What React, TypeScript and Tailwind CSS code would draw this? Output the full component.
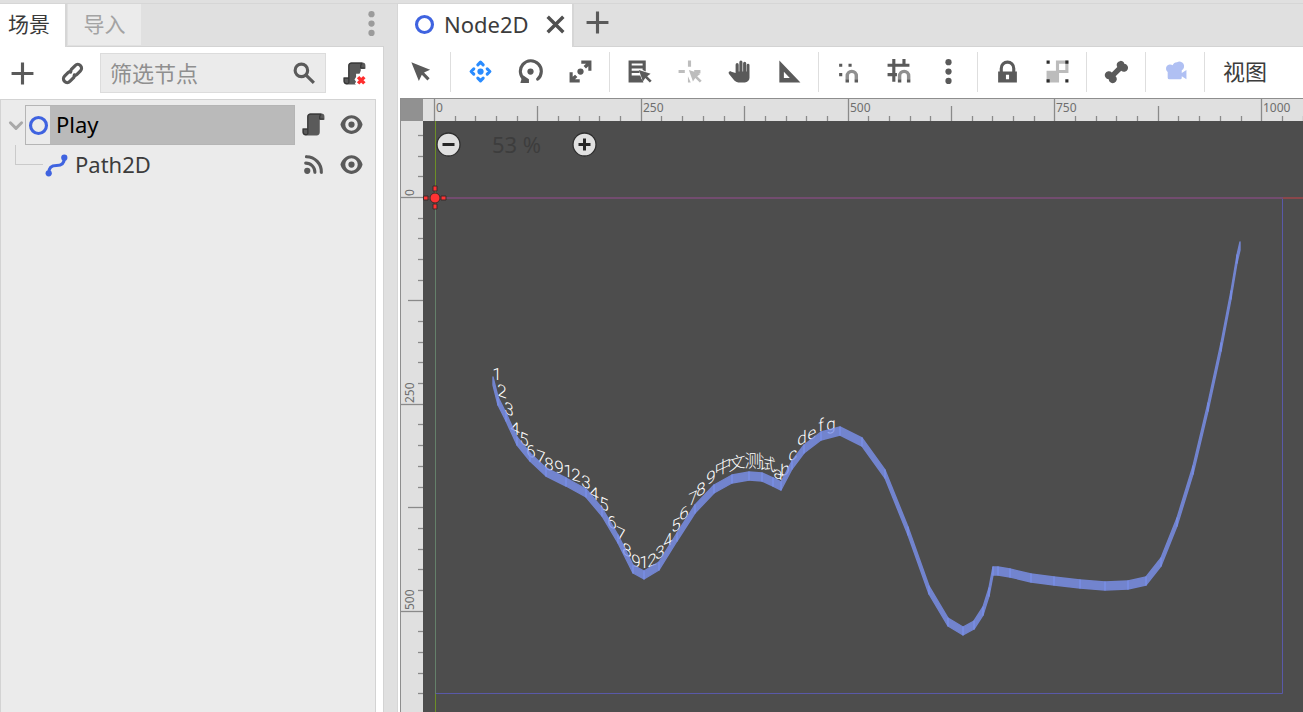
import type { ReactNode } from "react";

function Icon({ children, className = "" }: { children: ReactNode; className?: string }) {
  return (
    <svg viewBox="0 0 16 16" className={`size-[25px] shrink-0 ${className}`} fill="currentColor" aria-hidden="true">
      {children}
    </svg>
  );
}

const AddIcon = () => (
  <Icon>
    <path d="M7 1v6H1v2h6v6h2V9h6V7H9V1z" />
  </Icon>
);

const LinkIcon = () => (
  <Icon>
    <g fill="none" stroke="currentColor" strokeWidth="2" strokeLinecap="round">
      <path d="M6.8 7.2a2.6 2.6 0 0 1 .5-1.9l2.4-2.4a2.4 2.4 0 0 1 3.4 3.4l-2.4 2.4a2.4 2.4 0 0 1-1.6.7" />
      <path d="M9.2 8.8a2.6 2.6 0 0 1-.5 1.9l-2.4 2.4a2.4 2.4 0 0 1-3.4-3.4l2.4-2.4a2.4 2.4 0 0 1 1.6-.7" />
    </g>
  </Icon>
);

const SearchIcon = () => (
  <Icon>
    <path d="M6 1a5 5 0 0 0-5 5 5 5 0 0 0 5 5 5 5 0 0 0 2.752-.834l4.54 4.541 1.415-1.414-4.541-4.54A5 5 0 0 0 11 6a5 5 0 0 0-5-5zm0 2a3 3 0 0 1 3 3 3 3 0 0 1-3 3 3 3 0 0 1-3-3 3 3 0 0 1 3-3z" />
  </Icon>
);

const ScriptShape = () => (
  <>
    <path d="M6 1h7a2 2 0 0 1 2 2v2h-3v8a2 2 0 0 1-2 2H3a2 2 0 0 1-2-2v-2.5h3V3a2 2 0 0 1 2-2z" />
    <path
      d="M6 1.4h7M6 1.4A1.6 1.6 0 0 0 4.4 3v10A1.2 1.2 0 0 1 3 14.5 1.5 1.5 0 0 1 1.4 13v-2.1h3M12 4.6V3a1.6 1.6 0 0 1 1-1.5M12 4.6h2.6"
      fill="none"
      stroke="#363636"
      strokeWidth=".8"
    />
  </>
);

const ScriptIcon = () => (
  <Icon>
    <ScriptShape />
  </Icon>
);

const ScriptRemoveIcon = () => (
  <Icon>
    <ScriptShape />
    <path d="M9 8.2h2.2l1-2.2H16v10H9.8l-1.6-1.4.8-1.4-1-1.4 1-1.6z" fill="#fff" />
    <path d="M10.3 10.3l4 4M14.3 10.3l-4 4" stroke="#ff2e2e" strokeWidth="2.2" />
  </Icon>
);

const EyeIcon = () => (
  <Icon>
    <path
      fillRule="evenodd"
      d="M8 2C5.4 2 2.2 3.9 1 7.700a1 1 0 0 0 0 .6C2.200 12.200 5.500 14 8 14s5.800-1.800 7-5.700a1 1 0 0 0 0-.6C13.900 3.900 10.600 2 8 2zm0 2a4 4 0 0 1 0 8 4 4 0 0 1 0-8zm0 2a2 2 0 0 0 0 4 2 2 0 0 0 0-4z"
    />
  </Icon>
);

const SignalIcon = () => (
  <Icon>
    <circle cx="4" cy="12" r="2" />
    <path d="M3 7.100a5.800 5.800 0 0 1 5.900 5.900M3.500 3a9.600 9.600 0 0 1 9.500 10" fill="none" stroke="currentColor" strokeWidth="2" strokeLinecap="round" />
  </Icon>
);

const NodeIcon = () => (
  <Icon className="text-[#3f63e0]">
    <circle cx="8" cy="8" r="5.1" fill="none" stroke="currentColor" strokeWidth="2" />
  </Icon>
);

const PathIcon = () => (
  <Icon className="text-[#3f63e0]">
    <path d="M3 13c0-4 2-5 5-5s5-1 5-5" fill="none" stroke="currentColor" strokeWidth="2" />
    <circle cx="3" cy="13" r="2" />
    <circle cx="13" cy="3" r="2" />
  </Icon>
);

const Cursor = "M0 0l2.600 7.400 1.500-2.200 2.900 2.900 1.200-1.200-2.900-2.900 2.200-1.500z";

const SelectIcon = () => (
  <Icon>
    <path d="M1.500 2l4.800 12 1.900-3.900 3.600 3.600 1.400-1.400-3.600-3.600L13.500 6.800z" />
  </Icon>
);

const MoveIcon = () => (
  <Icon>
    <circle cx="8" cy="8" r="2" />
    <path
      d="M6.300 3.700L8 2l1.700 1.700M6.300 12.300L8 14l1.700-1.700M3.700 6.300L2 8l1.700 1.700M12.300 6.300L14 8l-1.700 1.700"
      fill="none"
      stroke="currentColor"
      strokeWidth="2"
      strokeLinecap="round"
      strokeLinejoin="round"
    />
  </Icon>
);

const RotateIcon = () => (
  <Icon>
    <circle cx="8" cy="8" r="2" />
    <path d="M4.200 13.200A6.700 6.700 0 1 1 12.600 12.900" fill="none" stroke="currentColor" strokeWidth="2" strokeLinecap="round" />
    <path d="M1.500 15.300L3 10.200 7 13V15.300z" />
  </Icon>
);

const ScaleIcon = () => (
  <Icon>
    <circle cx="8" cy="8" r="2" />
    <path d="M8.500 1H15v6.500h-2V4.600L11.500 6 10 4.500 11.500 3h-3zM7.500 15H1V8.500h2v2.900L4.500 10 6 11.500 4.500 13h3z" />
  </Icon>
);

const ListSelectIcon = () => (
  <Icon>
    <path fillRule="evenodd" d="M1 1h11v7l-2-1V6H3v1.500h5V9H3v1.500h5.500l.8 2.500H3v0h6.800L10.500 15H1zM3 2.800V4.200h7V2.800z" />
    <path d={Cursor} transform="translate(7.600 7)" />
  </Icon>
);

const PivotIcon = () => (
  <Icon>
    <path d="M7 1h2v4H7zM1 7h4v2H1zM11 7h4v2h-2.500L11 8.500zM7 11l1.800 4H7z" />
    <path d={Cursor} transform="translate(7.600 7)" />
  </Icon>
);

const HandIcon = () => (
  <Icon>
    <path d="M5.500 9V3.600a1 1 0 0 1 2 0V8h.4V2a1 1 0 0 1 2 0v6h.4V2.700a1 1 0 0 1 2 0V8h.3V4a.9.9 0 0 1 1.800 0v8a3 3 0 0 1-3 3H7.200a3.400 3.400 0 0 1-2.500-1.200L1.300 9.600c-.8-1 .4-2.200 1.500-1.500z" />
  </Icon>
);

const RulerIcon = () => (
  <Icon>
    <path fillRule="evenodd" d="M1.500 1L15 15H1.500zM4.400 8.200v3.900h3.800z" />
  </Icon>
);

const Magnet = () => (
  <>
    <path d="M7.200 13v-2.200a2.900 2.900 0 0 1 5.800 0V13" fill="none" stroke="#909090" strokeWidth="2.200" />
    <path d="M6.100 12.900h2.200V15H6.100zM11.900 12.900h2.200V15h-2.200z" />
  </>
);

const SmartSnapIcon = () => (
  <Icon>
    <path d="M2 3h2v2H2zM8 3h2v2H8zM2 9h2v2H2z" />
    <Magnet />
  </Icon>
);

const GridSnapIcon = () => (
  <Icon>
    <path d="M4 0h2v3h4.500V0h2v3H15v2H6v4h1v2H6v3.500H4V11H1V9h3V5H1V3h3z" />
    <g transform="translate(1.500)">
      <Magnet />
    </g>
  </Icon>
);

const DotsIcon = () => (
  <Icon>
    <circle cx="8" cy="2" r="2" />
    <circle cx="8" cy="8" r="2" />
    <circle cx="8" cy="14" r="2" />
  </Icon>
);

const LockIcon = () => (
  <Icon>
    <path fillRule="evenodd" d="M8 1a5 5 0 0 0-5 5v2H2v7h12V8h-1V6a5 5 0 0 0-5-5zm0 2a3 3 0 0 1 3 3v2H5V6a3 3 0 0 1 3-3zM7 10h2v3H7z" />
  </Icon>
);

const GroupIcon = () => (
  <Icon>
    <g fill="#bcbcbc">
      <path d="M1 7.500h7.500V9H9v6H1z" />
      <path fillRule="evenodd" d="M7 1h8v8H7zM9 3v4h4V3z" />
    </g>
    <path d="M1 1h2v2H1zM13 1h2v2h-2zM1 13h2v2H1zM13 13h2v2h-2z" fill="#2d2d2d" />
  </Icon>
);

const BoneIcon = () => (
  <Icon>
    <path d="M10.500 1.200a2.600 2.600 0 0 0-2 3.900L5 8.600A2.600 2.600 0 1 0 3 13a2.600 2.600 0 1 0 4.400-2L11 7.500a2.600 2.600 0 1 0 2-4.500 2.600 2.600 0 0 0-2.500-1.800z" />
  </Icon>
);

const CameraIcon = () => (
  <Icon className="text-[#b0c0f3]">
    <path d="M9 2a3 3 0 0 0-2.800 2A2.500 2.500 0 1 0 3 8.300V12a1 1 0 0 0 1 1h7a1 1 0 0 0 1-1v-1l3 2V7l-3 2V7.200A3 3 0 0 0 9 2z" />
  </Icon>
);

function Tool({ label, children, className = "" }: { label: string; children: ReactNode; className?: string }) {
  return (
    <button type="button" aria-label={label} className={`flex h-10 w-[50px] shrink-0 items-center justify-center ${className}`}>
      {children}
    </button>
  );
}

const Separator = () => (
  <span className="flex w-[9px] shrink-0 justify-center">
    <span className="h-10 w-px bg-[#dedede]" />
  </span>
);

function SceneDock() {
  return (
    <aside className="flex w-[384px] shrink-0 flex-col">
      <div className="flex h-[43px] items-start border-b border-[#d3d3d3]">
        <div role="tablist" className="flex">
          <button role="tab" aria-selected="true" className="-mb-px h-[43px] w-[67px] border-r-2 border-[#d6d6d6] bg-white pb-0.5 pl-2 text-left text-[21px] text-[#3a3a3a]">
            场景
          </button>
          <button role="tab" aria-selected="false" className="ml-px h-[41px] w-[73px] bg-[#ebebeb] text-[21px] text-[#a3a3a3]">
            导入
          </button>
        </div>
        <button aria-label="停靠选项" className="mt-[7px] ml-auto text-[#9b9b9b]">
          <DotsIcon />
        </button>
      </div>
      <div className="flex min-h-0 flex-1 flex-col border-r border-[#d3d3d3] bg-white pr-[7px]">
        <div className="flex items-center py-[6px] text-[#5a5a5a]">
          <button aria-label="添加节点" className="flex w-[50px] justify-center pr-[6px]">
            <AddIcon />
          </button>
          <button aria-label="实例化场景" className="flex w-[50px] justify-center pr-[6px]">
            <LinkIcon />
          </button>
          <label className="flex h-10 min-w-0 flex-1 items-center border border-[#dcdcdc] bg-[#ebebeb] pr-2 pl-[9px]">
            <input
              type="text"
              aria-label="筛选节点"
              placeholder="筛选节点"
              className="min-w-0 flex-1 bg-transparent text-[22px] outline-none placeholder:text-[#8f8f8f]"
            />
            <SearchIcon />
          </label>
          <button aria-label="移除脚本" className="flex w-[50px] justify-center pl-[7px]">
            <ScriptRemoveIcon />
          </button>
        </div>
        <ul role="tree" className="flex-1 border border-b-0 border-[#d3d3d3] bg-[#ebebeb] pt-[5px] text-[22px] leading-[36px] text-[#3c3c3c]">
          <li role="treeitem" aria-selected="true" aria-expanded="true" className="flex h-10 items-center">
            <svg viewBox="0 0 16 16" className="ml-[6px] size-[18px] shrink-0" fill="none" stroke="#a9a9a9" strokeWidth="2.600" strokeLinecap="round" strokeLinejoin="round" aria-hidden="true">
              <path d="M3 6l5 5 5-5" />
            </svg>
            <div className="flex h-10 flex-1 items-center border border-[#b5b5b5] bg-[#bababa] text-black">
              <span className="flex h-[38px] w-6 items-center justify-center bg-[#ebebeb]">
                <NodeIcon />
              </span>
              <span className="pb-0.5 pl-[6px]">Play</span>
            </div>
            <span className="flex w-20 items-center justify-between pr-[11px] pb-0.5 pl-[6px] text-[#5a5a5a]">
              <button aria-label="打开脚本">
                <ScriptIcon />
              </button>
              <button aria-label="切换可见性">
                <EyeIcon />
              </button>
            </span>
          </li>
          <li role="treeitem" aria-selected="false" className="flex h-10 items-center">
            <span className="ml-[14px] h-5 w-7 self-start border-b border-l border-[#cacaca]" />
            <span className="flex flex-1 items-center pl-px">
              <PathIcon />
              <span className="pb-0.5 pl-[6px]">Path2D</span>
            </span>
            <span className="flex w-20 items-center justify-between pr-[11px] pb-0.5 pl-[6px] text-[#5a5a5a]">
              <button aria-label="信号连接">
                <SignalIcon />
              </button>
              <button aria-label="切换可见性">
                <EyeIcon />
              </button>
            </span>
          </li>
        </ul>
      </div>
    </aside>
  );
}

const UNIT = 0.8272;
const steps = (from: number, to: number) => Array.from({ length: to - from + 1 }, (_, i) => from + i);

function TopRuler() {
  return (
    <svg className="h-[22px] min-w-0 flex-1 bg-[#e0e0e0]" aria-hidden="true">
      {steps(0, 80).map((n) => {
        const x = Math.round(12 + n * 25 * UNIT) - 0.5;
        const top = n % 10 === 0 ? 0 : n % 5 === 0 ? 7 : 17;
        return <path key={n} d={`M${x} ${top}V23`} stroke="#8a8a8a" strokeWidth="1.300" />;
      })}
      {steps(0, 4).map((n) => (
        <text key={n} x={Math.round(13 + n * 250 * UNIT)} y="13" className="fill-[#6e6e6e] text-[12px]">
          {n * 250}
        </text>
      ))}
    </svg>
  );
}

function SideRuler() {
  return (
    <svg className="h-full w-[22px] shrink-0 bg-[#e0e0e0]" aria-hidden="true">
      {steps(-3, 80).map((n) => {
        const y = Math.round(77 + n * 25 * UNIT) - 0.5;
        const left = n % 10 === 0 ? 0 : n % 5 === 0 ? 7 : 17;
        return <path key={n} d={`M${left} ${y}H23`} stroke="#8a8a8a" strokeWidth="1.300" />;
      })}
      {steps(0, 2).map((n) => {
        const y = Math.round(75 + n * 250 * UNIT);
        return (
          <text key={n} x="13" y={y} transform={`rotate(-90 13 ${y})`} className="fill-[#6e6e6e] text-[12px]">
            {n * 250}
          </text>
        );
      })}
    </svg>
  );
}

type Point = [number, number];

// Upper edge of the ribbon; every segment hangs 10px below it.
const ribbon: Point[] = [
  [493, 376], [498, 396], [506, 412], [517, 436], [530, 452], [546, 467], [566, 477], [586, 488], [602, 507], [618, 534],
  [633, 564], [644, 570], [659, 561], [677, 532], [695, 504], [714, 484], [732, 474], [749, 471], [762, 472], [773, 477],
  [781, 481], [792, 460], [804, 444], [821, 431], [840, 426], [862, 437], [885, 469], [908, 526], [929, 585], [948, 617],
  [963, 626], [974, 620], [983, 606], [989, 587], [993, 566], [998, 566], [1010, 568], [1031, 573], [1054, 576], [1080, 579],
  [1105, 581], [1128, 580], [1146, 576], [1161, 557], [1177, 517], [1193, 465], [1208, 402], [1221, 342], [1231, 290],
  [1237, 254], [1240, 241],
];

// Character, centre x, centre y, slope in degrees.
const glyphs: [string, number, number, number][] = [
  ["1", 497, 374, 0], ["2", 502, 391, 20], ["3", 509, 409, 25], ["4", 515, 428, 25], ["5", 524, 439, 25], ["6", 531, 451, 20],
  ["7", 541, 457, 20], ["8", 549, 464, 15], ["9", 559, 467, 15], ["1", 568, 471, 15], ["2", 576, 475, 15], ["3", 586, 482, 20],
  ["4", 594, 493, 25], ["5", 604, 504, 25], ["6", 612, 522, 25], ["7", 621, 534, 25], ["8", 627, 550, 25], ["9", 636, 561, 20],
  ["1", 644, 562, 0], ["2", 652, 560, -20], ["3", 660, 552, -25], ["4", 668, 540, -25], ["5", 676, 525, -25], ["6", 684, 513, -25],
  ["7", 693, 498, -25], ["8", 701, 489, -25], ["9", 711, 477, -25], ["中", 723, 467, -25], ["文", 737, 463, -15], ["测", 753, 461, 0],
  ["试", 767, 464, 10], ["a", 778, 473, 20], ["b", 785, 469, -25], ["c", 793, 454, -25], ["d", 802, 438, -25], ["e", 812, 433, -25],
  ["f", 821, 425, -15], ["g", 831, 424, -10],
];

function Scene() {
  return (
    <svg className="h-full w-full" role="img" aria-label="2D 场景">
      <path d="M12 572.500H859.500V77" fill="none" stroke="#5959a8" />
      <path d="M0 77H2000" stroke="#8a474b" strokeWidth="2" />
      <path d="M12 77H860" stroke="#724c6f" strokeWidth="2" />
      <path d="M12.500 0V2000" stroke="#6d8f26" />
      <path d="M12.500 77V573" stroke="#64806a" />
      <g transform="translate(-423 -121)">
        <g className="fill-white font-['Roboto','Noto_Sans_CJK_SC',sans-serif] text-[17px] font-light" textAnchor="middle">
          {glyphs.map(([char, x, y, slope], i) => (
            <text key={i} transform={`translate(${x} ${y}) skewY(${slope})`} y="6">
              {char}
            </text>
          ))}
        </g>
        <g fill="#7c92ef" stroke="#7c92ef" strokeWidth="1.400" strokeLinejoin="round">
          {ribbon.slice(1).map(([x, y], i) => {
            const [px, py] = ribbon[i];
            return <path key={i} opacity=".8" d={`M${px} ${py + 1}L${x} ${y + 1}v8L${px} ${py + 9}z`} />;
          })}
        </g>
      </g>
      <g fill="#ff3333" stroke="#3a2a2a">
        <path d="M.5 75h4.500v4H.5zM18 75h5v4h-5zM10 65h4v5h-4zM10 83h4v5h-4z" />
        <circle cx="12" cy="77" r="5" />
      </g>
    </svg>
  );
}

function ZoomButton({ label, path }: { label: string; path: string }) {
  return (
    <button aria-label={label} className="size-[25px]">
      <svg viewBox="0 0 25 25" className="size-full" aria-hidden="true">
        <circle cx="12.500" cy="12.500" r="11.500" fill="#e0e0e0" stroke="#2e2e2e" strokeWidth="1.300" />
        <path d={path} stroke="#262626" strokeWidth="3" />
      </svg>
    </button>
  );
}

function Editor() {
  return (
    <main className="flex min-w-0 flex-1 flex-col">
      <div className="flex h-[43px] items-start border-b border-[#d3d3d3]">
        <div className="-mb-px flex h-[43px] w-[177px] items-center border-r-2 border-l border-[#d6d6d6] bg-white pb-[3px] pl-[14px] text-[#3c3c3c]">
          <NodeIcon />
          <span className="pl-[7px] text-[22px]">Node2D</span>
          <button aria-label="关闭标签页" className="ml-auto pr-1 text-[#505050]">
            <Icon>
              <path d="M3 3l10 10M13 3L3 13" stroke="currentColor" strokeWidth="2.200" />
            </Icon>
          </button>
        </div>
        <button aria-label="新建场景" className="mt-[6px] ml-[11px] text-[#5a5a5a]">
          <AddIcon />
        </button>
      </div>
      <div className="flex min-h-0 flex-1 flex-col border-l border-[#d6d6d6] bg-white pl-[2px]">
        <div className="-ml-1 flex h-[51px] items-center pb-[2px] text-[#5a5a5a]">
          <Tool label="选择模式"><SelectIcon /></Tool>
          <Separator />
          <Tool label="移动模式" className="text-[#2a8cff]"><MoveIcon /></Tool>
          <Tool label="旋转模式"><RotateIcon /></Tool>
          <Tool label="缩放模式"><ScaleIcon /></Tool>
          <Separator />
          <Tool label="列表选择"><ListSelectIcon /></Tool>
          <Tool label="更改轴心" className="text-[#bdbdbd]"><PivotIcon /></Tool>
          <Tool label="平移模式"><HandIcon /></Tool>
          <Tool label="标尺模式"><RulerIcon /></Tool>
          <Separator />
          <Tool label="智能吸附"><SmartSnapIcon /></Tool>
          <Tool label="栅格吸附"><GridSnapIcon /></Tool>
          <Tool label="吸附选项"><DotsIcon /></Tool>
          <Separator />
          <Tool label="锁定"><LockIcon /></Tool>
          <Tool label="编组"><GroupIcon /></Tool>
          <Separator />
          <Tool label="骨骼选项"><BoneIcon /></Tool>
          <Separator />
          <Tool label="覆盖摄像机"><CameraIcon /></Tool>
          <Separator />
          <button className="shrink-0 pr-3 pl-[14px] text-[22px] text-[#3c3c3c]">视图</button>
        </div>
        <div className="flex min-h-0 flex-1 flex-col border-t border-l border-[#8e8e8e]">
          <div className="flex">
            <span className="size-[22px] shrink-0 bg-[#919191]" />
            <TopRuler />
          </div>
          <div className="flex min-h-0 flex-1">
            <SideRuler />
            <div className="relative min-w-0 flex-1 overflow-hidden bg-[#4d4d4d]">
              <Scene />
              <div className="absolute top-[11px] left-[13px] flex items-center">
                <ZoomButton label="缩小" path="M6.500 12.500h12" />
                <span className="w-[111px] text-center text-[22px] leading-[25px] text-[#3d3d3d]">53 %</span>
                <ZoomButton label="放大" path="M6.500 12.500h12M12.500 6.500v12" />
              </div>
            </div>
          </div>
        </div>
      </div>
    </main>
  );
}

export default function App() {
  return (
    <div className="flex h-screen flex-col overflow-hidden bg-[#e0e0e0] pt-[3px] font-['Noto_Sans','Noto_Sans_CJK_SC',sans-serif]">
      <div className="flex min-h-0 flex-1 gap-[13px] border-t border-[#d6d6d6]">
        <SceneDock />
        <Editor />
      </div>
    </div>
  );
}
